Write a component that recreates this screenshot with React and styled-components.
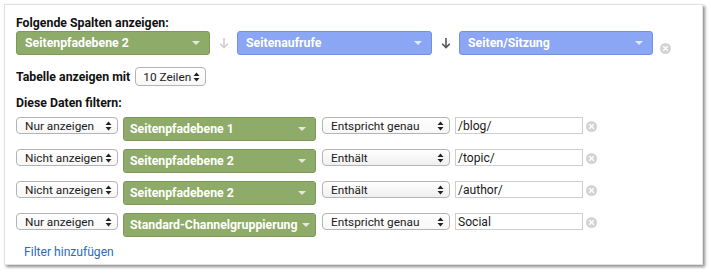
import React from "react";
import styled, { createGlobalStyle } from "styled-components";

const FS = "11.8px";

const Global = createGlobalStyle`
  html, body { margin: 0; padding: 0; background: #fff; }
  body { font-family: Roboto, "Liberation Sans", Arial, sans-serif; font-size: ${FS}; color: #222; }
  svg { flex: none; }
`;

const Card = styled.div`
  box-sizing: border-box;
  margin: 4px;
  width: 699px;
  height: 261px;
  border: 1px solid #e2e2e2;
  background: #fff;
  box-shadow: 2px 2px 3px rgba(0, 0, 0, 0.45);
  padding: 10px 11px 4px 11px;
`;

const Heading = styled.div`
  font-weight: 700;
  font-size: 12.3px;
  line-height: 16px;
  color: #111;
  margin-top: ${(p) => p.$mt || 0}px;
`;

const ColumnRow = styled.div`
  display: flex;
  align-items: flex-start;
`;

const DimSelect = styled.div`
  box-sizing: border-box;
  width: ${(p) => p.$w}px;
  height: 24px;
  flex: none;
  display: flex;
  align-items: center;
  justify-content: space-between;
  padding: 0 9px 0 ${(p) => p.$pl || 8}px;
  border-radius: 3px;
  background: ${(p) => (p.$kind === "blue" ? "#8ba6f4" : "#8eab69")};
  border: 1px solid ${(p) => (p.$kind === "blue" ? "#7490e4" : "#7e9a5b")};
  color: #fff;
  font-weight: 700;
  font-size: 12.3px;
  white-space: nowrap;
`;

const Caret = styled.span`
  flex: none;
  width: 0;
  height: 0;
  border-left: 4px solid transparent;
  border-right: 4px solid transparent;
  border-top: 4px solid rgba(255, 255, 255, 0.75);
  margin-left: 4px;
`;

const ArrowCell = styled.div`
  width: 27px;
  height: 24px;
  display: flex;
  align-items: center;
  justify-content: center;
  flex: none;
`;

const RemoveBtn = styled.div`
  width: 11px;
  height: 11px;
  border-radius: 50%;
  background: #d3d3d3;
  flex: none;
  margin-left: ${(p) => p.$ml}px;
  margin-top: ${(p) => p.$mt}px;
  display: flex;
  align-items: center;
  justify-content: center;
`;

const TableRow = styled.div`
  display: flex;
  align-items: center;
  margin-top: 12px;
  height: 19px;
  gap: 5px;
`;

const NativeSelect = styled.div`
  box-sizing: border-box;
  width: ${(p) => p.$w}px;
  height: ${(p) => p.$h || 17}px;
  flex: none;
  display: flex;
  align-items: center;
  justify-content: space-between;
  padding: 0 5px 0 ${(p) => p.$pl || 8}px;
  margin-left: ${(p) => p.$ml || 0}px;
  border: 1px solid #b4b4b4;
  border-radius: 4px;
  background: linear-gradient(#ffffff, ${(p) => (p.$gray ? "#efefef" : "#f7f7f7")});
  font-size: ${FS};
  color: #1a1a1a;
  white-space: nowrap;
`;

const TextInput = styled.div`
  box-sizing: border-box;
  width: 128px;
  height: 17px;
  flex: none;
  border: 1px solid #cfcfcf;
  padding: 0 2px;
  display: flex;
  align-items: center;
  font-size: 12.1px;
  color: #1a1a1a;
  margin-left: 5px;
`;

const FilterList = styled.div`
  display: flex;
  flex-direction: column;
  gap: 8px;
  margin-top: 6px;
`;

const FilterRow = styled.div`
  display: flex;
  align-items: flex-start;
  gap: 5px;
`;

const RowTail = styled.div`
  display: flex;
  align-items: flex-start;
`;

const AddLink = styled.a`
  display: block;
  margin: 7px 0 0 8px;
  color: #2a6cb8;
  font-size: 12.1px;
  line-height: 16px;
  text-decoration: none;
`;

const UpDown = () => (
  <svg width="7" height="10" viewBox="0 0 7 10">
    <path d="M3.5 0.5 L6.5 4 L0.5 4 Z" fill="#222" />
    <path d="M3.5 9.5 L6.5 6 L0.5 6 Z" fill="#222" />
  </svg>
);

const DownArrow = ({ color }) => (
  <svg width="10" height="12" viewBox="0 0 10 12">
    <path d="M5 1 V10.5" stroke={color} strokeWidth="1.6" fill="none" />
    <path d="M1.2 6.8 L5 10.6 L8.8 6.8" stroke={color} strokeWidth="1.6" fill="none" />
  </svg>
);

const XMark = () => (
  <svg width="7" height="7" viewBox="0 0 7 7">
    <path d="M1.2 1.2 L5.8 5.8 M5.8 1.2 L1.2 5.8" stroke="#fff" strokeWidth="1.4" />
  </svg>
);

const filters = [
  { mode: "Nur anzeigen", dim: "Seitenpfadebene 1", cond: "Entspricht genau", value: "/blog/", gray: false },
  { mode: "Nicht anzeigen", dim: "Seitenpfadebene 2", cond: "Enthält", value: "/topic/", gray: true },
  { mode: "Nicht anzeigen", dim: "Seitenpfadebene 2", cond: "Enthält", value: "/author/", gray: true },
  { mode: "Nur anzeigen", dim: "Standard-Channelgruppierung", cond: "Entspricht genau", value: "Social", gray: false },
];

export default function App() {
  return (
    <>
      <Global />
      <Card>
        <Heading>Folgende Spalten anzeigen:</Heading>
        <ColumnRow>
          <DimSelect $w={194}>
            Seitenpfadebene 2<Caret />
          </DimSelect>
          <ArrowCell>
            <DownArrow color="#cfcfcf" />
          </ArrowCell>
          <DimSelect $w={195} $kind="blue">
            Seitenaufrufe<Caret />
          </DimSelect>
          <ArrowCell>
            <DownArrow color="#555" />
          </ArrowCell>
          <DimSelect $w={194} $kind="blue">
            Seiten/Sitzung<Caret />
          </DimSelect>
          <RemoveBtn $ml={7} $mt={12}>
            <XMark />
          </RemoveBtn>
        </ColumnRow>
        <TableRow>
          <Heading>Tabelle anzeigen mit</Heading>
          <NativeSelect $w={71} $h={19} $pl={7}>
            10 Zeilen
            <UpDown />
          </NativeSelect>
        </TableRow>
        <Heading $mt={9}>Diese Daten filtern:</Heading>
        <FilterList>
          {filters.map((f, i) => (
            <FilterRow key={i}>
              <NativeSelect $w={102}>
                {f.mode}
                <UpDown />
              </NativeSelect>
              <DimSelect $w={193} $pl={6}>
                {f.dim}
                <Caret />
              </DimSelect>
              <RowTail>
                <NativeSelect $w={128} $gray={f.gray} $ml={1}>
                  {f.cond}
                  <UpDown />
                </NativeSelect>
                <TextInput>{f.value}</TextInput>
                <RemoveBtn $ml={3} $mt={4}>
                  <XMark />
                </RemoveBtn>
              </RowTail>
            </FilterRow>
          ))}
        </FilterList>
        <AddLink href="#">Filter hinzufügen</AddLink>
      </Card>
    </>
  );
}
